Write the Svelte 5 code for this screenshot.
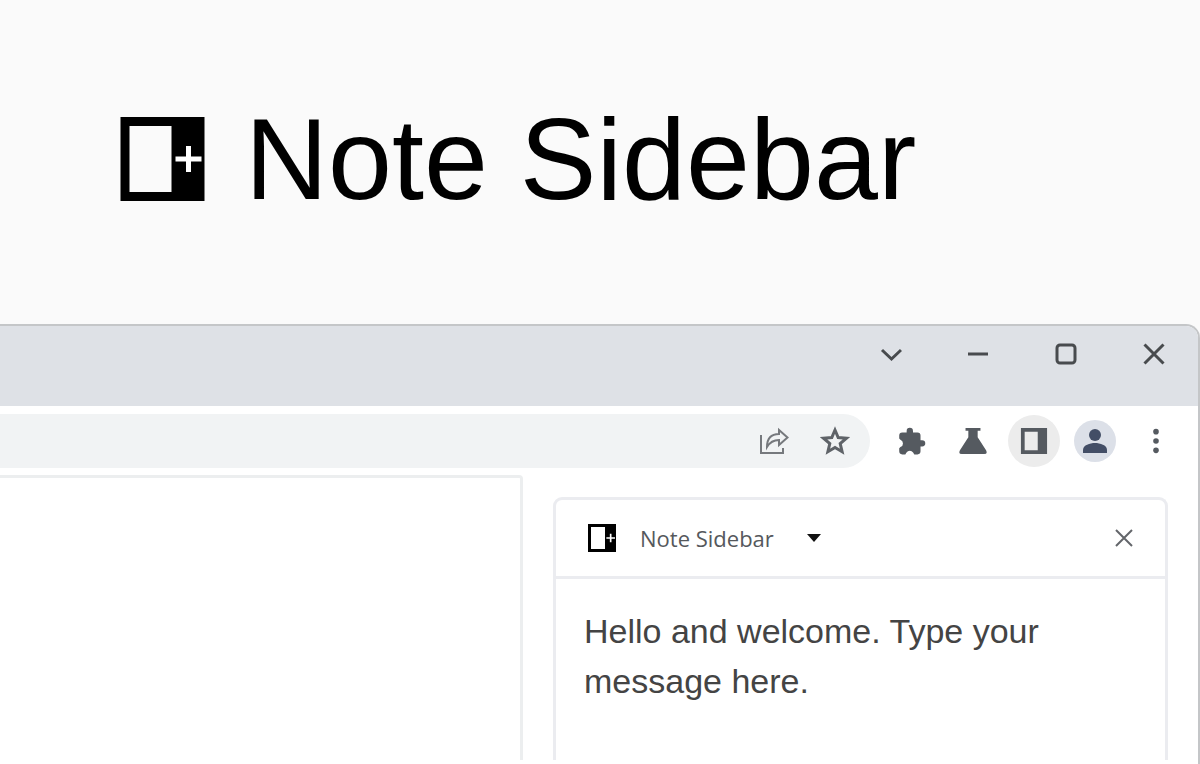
<script>
	let note = $state("Hello and welcome. Type your message here.")
	let address = $state("")
	let panelOpen = $state(true)
</script>

{#snippet logo()}
	<svg class="logo" viewBox="0 0 84 84" aria-hidden="true">
		<path fill-rule="evenodd" d="M0 0h84v84H0zM9 9v66h42V9z" />
		<path class="plus" d="M55 42h26M68 29v26" />
	</svg>
{/snippet}

<div class="page">
	<header class="hero">
		{@render logo()}
		<h1>Note Sidebar</h1>
	</header>

	<main class="window">
		<div class="titlebar">
			<button aria-label="Search tabs">
				<svg viewBox="0 0 24 24"><path d="M4 8l9.500 9 9.500-9" /></svg>
			</button>
			<button aria-label="Minimize">
				<svg viewBox="0 0 24 24"><path d="M2 12h20" /></svg>
			</button>
			<button aria-label="Maximize">
				<svg viewBox="0 0 24 24"><rect x="3" y="3" width="18" height="18" rx="3" /></svg>
			</button>
			<button aria-label="Close window">
				<svg viewBox="0 0 24 24"><path d="M2.500 2.500l19 19M21.500 2.500l-19 19" /></svg>
			</button>
		</div>

		<div class="toolbar">
			<div class="omnibox">
				<input type="text" aria-label="Address" bind:value={address} />
				<button aria-label="Share this page">
					<svg class="outline thin" viewBox="0 0 32 32">
						<path d="M2 10v18h22v-5" />
						<path d="M8 22c0-9 4-13 12-13V5l8.500 7.500L20 20v-5c-6 0-9 2-12 7z" />
					</svg>
				</button>
				<button aria-label="Bookmark this page">
					<svg class="outline" viewBox="0 0 32 32">
						<path d="M15 5l3.200 7.500 8.300.7-6.300 5.400 1.900 8.100-7.100-4.300-7.100 4.300 1.900-8.100-6.300-5.400 8.300-.7z" />
					</svg>
				</button>
			</div>

			<button class="tool" aria-label="Extensions">
				<svg viewBox="1 0 23 23">
					<path d="M20.800 10.800H19.500V7a2.500 2.500 0 0 0-2.500-2.500h-3.700V3.300a2.600 2.600 0 0 0-5.200 0v1.200H4.500A2.500 2.500 0 0 0 2 7v2.500l1 1a3.200 3.200 0 0 1 0 6l-1 1V20a2.500 2.500 0 0 0 2.500 2.500H7l1-1.500a3.200 3.200 0 0 1 5.400 0l1 1.500H17a2.500 2.500 0 0 0 2.500-2.500v-4h1.300a2.600 2.600 0 0 0 0-5.200z" />
				</svg>
			</button>
			<button class="tool" aria-label="Labs">
				<svg viewBox="0 0 30 30">
					<path d="M7 1h16v3h-3v7l9 14q2 4-2 4H3q-4 0-2-4l9-14V4H7z" />
				</svg>
			</button>
			<button
				class="tool active"
				aria-label="Side panel"
				aria-pressed={panelOpen}
				onclick={() => (panelOpen = !panelOpen)}
			>
				<svg viewBox="0 0 30 30">
					<path fill-rule="evenodd" d="M1 1h28v28H1zM5 5v20h14V5z" />
				</svg>
			</button>
			<button class="tool" aria-label="Profile">
				<span class="avatar">
					<svg viewBox="0 0 24 24">
						<circle cx="12" cy="6" r="6" />
						<path d="M0 24v-3c0-5 7-7 12-7s12 2 12 7v3z" />
					</svg>
				</span>
			</button>
			<button class="tool" aria-label="Menu">
				<svg viewBox="0 0 30 30">
					<circle cx="15" cy="5" r="3" />
					<circle cx="15" cy="15" r="3" />
					<circle cx="15" cy="25" r="3" />
				</svg>
			</button>
		</div>

		<div class="content">
			<div class="viewport"></div>
			{#if panelOpen}
				<section class="panel" aria-label="Side panel">
					<div class="panel-header">
						<button class="picker">
							{@render logo()}
							<span>Note Sidebar</span>
							<svg class="caret" viewBox="0 0 14 8"><path d="M0 0h14L7 8z" /></svg>
						</button>
						<button
							class="close"
							aria-label="Close side panel"
							onclick={() => (panelOpen = false)}
						>
							<svg viewBox="0 0 18 18"><path d="M1 1l16 16M17 1L1 17" /></svg>
						</button>
					</div>
					<textarea aria-label="Note" spellcheck="false" bind:value={note}></textarea>
				</section>
			{/if}
		</div>
	</main>
</div>

<style>
	:global(body) {
		margin: 0;
		background: #fafafa;
	}

	.page {
		display: flex;
		flex-direction: column;
		min-height: 100vh;
		font-family: "Liberation Sans", Arial, sans-serif;
	}

	button {
		display: flex;
		align-items: center;
		justify-content: center;
		padding: 0;
		border: 0;
		background: none;
		color: inherit;
		font: inherit;
		cursor: pointer;
	}

	svg {
		display: block;
	}

	.logo {
		flex: none;
		fill: #000;
	}

	.plus {
		fill: none;
		stroke: #fff;
		stroke-width: 5;
	}

	.hero {
		display: flex;
		align-items: center;
		gap: 40px;
		padding: 93px 120px 99px;
		background: #fafafa;
	}

	.hero .logo {
		width: 85px;
		height: 84px;
	}

	h1 {
		margin: 0;
		font-size: 115px;
		font-weight: 400;
		line-height: 132px;
		color: #000;
	}

	.window {
		flex: 1;
		display: flex;
		flex-direction: column;
		border: solid #c4c6c8;
		border-width: 2px 2px 0 0;
		border-radius: 0 14px 0 0;
		background: #fff;
		overflow: hidden;
	}

	.titlebar {
		display: flex;
		justify-content: flex-end;
		padding-bottom: 24px;
		background: #dee1e6;
	}

	.titlebar button {
		width: 88px;
		height: 56px;
	}

	.titlebar svg {
		width: 24px;
		height: 24px;
		fill: none;
		stroke: #484b4e;
		stroke-width: 3;
	}

	.toolbar {
		display: flex;
		align-items: center;
		gap: 9px;
		padding: 8px 16px 7px 0;
		color: #555a60;
	}

	.omnibox {
		flex: 1;
		display: flex;
		align-items: center;
		gap: 9px;
		height: 54px;
		margin-right: 7px;
		padding-right: 8px;
		border-radius: 0 27px 27px 0;
		background: #f1f3f4;
	}

	.omnibox input {
		flex: 1;
		min-width: 0;
		height: 40px;
		padding: 0 16px;
		border: 0;
		outline: 0;
		background: none;
		font: inherit;
		font-size: 24px;
	}

	.omnibox button,
	.tool {
		flex: none;
		width: 52px;
		height: 52px;
		border-radius: 50%;
	}

	.omnibox svg {
		width: 32px;
		height: 32px;
	}

	.outline {
		fill: none;
		stroke: #5f6368;
		stroke-width: 3;
	}

	.thin {
		stroke: #76797d;
		stroke-width: 2;
	}

	.tool svg {
		width: 28px;
		height: 28px;
		fill: currentColor;
	}

	.active {
		background: #ececec;
	}

	.avatar {
		display: flex;
		align-items: center;
		justify-content: center;
		width: 42px;
		height: 42px;
		border-radius: 50%;
		background: #dce0e8;
		color: #434e66;
	}

	.avatar svg {
		width: 24px;
		height: 24px;
	}

	.content {
		flex: 1;
		display: flex;
		gap: 30px;
		padding: 0 30px 4px 0;
	}

	.viewport {
		flex: 1;
		border: solid #eceeef;
		border-width: 3px 3px 0 0;
		border-radius: 0 4px 0 0;
	}

	.panel {
		display: flex;
		flex-direction: column;
		box-sizing: border-box;
		width: 615px;
		max-width: 60%;
		margin-top: 22px;
		border: 3px solid #ebecf0;
		border-bottom: 0;
		border-radius: 9px 9px 0 0;
	}

	.panel-header {
		display: flex;
		align-items: center;
		justify-content: space-between;
		height: 76px;
		padding: 0 25px 0 32px;
		border-bottom: 3px solid #ebecf0;
	}

	.picker {
		gap: 24px;
		color: #55585c;
		font-family: "Open Sans", "Noto Sans", sans-serif;
		font-size: 22px;
		line-height: 30px;
	}

	.picker .logo {
		width: 28px;
		height: 28px;
	}

	.caret {
		width: 14px;
		height: 8px;
		margin-left: 9px;
		fill: #111;
	}

	.close {
		width: 32px;
		height: 32px;
	}

	.close svg {
		width: 18px;
		height: 18px;
		fill: none;
		stroke: #63666a;
		stroke-width: 2;
	}

	textarea {
		flex: 1;
		box-sizing: border-box;
		width: 100%;
		padding: 27px 28px;
		border: 0;
		outline: 0;
		background: none;
		resize: none;
		color: #444;
		font-family: inherit;
		font-size: 34px;
		line-height: 50px;
	}
</style>
